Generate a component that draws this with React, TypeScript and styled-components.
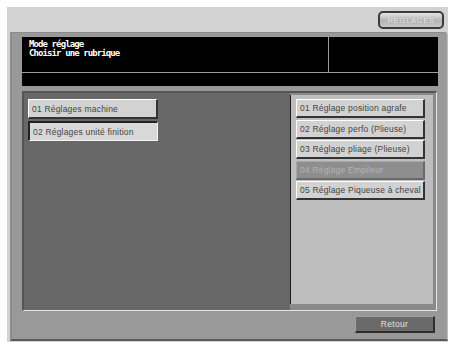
import React from 'react';
import styled, { createGlobalStyle } from 'styled-components';

const GlobalStyle = createGlobalStyle`
  body {
    margin: 0;
    background: #ffffff;
    font-family: "Liberation Sans", Arial, sans-serif;
  }
`;

const Screen = styled.div`
  margin: 7px 0 0 7px;
  width: 441px;
  height: 335px;
  background: #d2d2d2;
  display: flex;
  flex-direction: column;
`;

const TopBar = styled.div`
  height: 25px;
  display: flex;
  justify-content: flex-end;
  align-items: flex-start;
  padding: 4px 4px 0 0;
  box-sizing: border-box;
`;

const ModeButton = styled.div`
  width: 66px;
  height: 18px;
  box-sizing: border-box;
  border: 2px solid #3a3a3a;
  border-radius: 5px;
  background: linear-gradient(#e4e4e4, #b4b4b4 55%, #c8c8c8);
  display: flex;
  align-items: center;
  justify-content: center;
  font-size: 8px;
  letter-spacing: 0.4px;
  color: #f4f4f4;
  text-shadow: 0 0 1px #777;
`;

const MainPanel = styled.div`
  margin-left: 3px;
  width: 438px;
  height: 309px;
  box-sizing: border-box;
  background: #999999;
  border-top: 1px solid #8a8a8a;
  border-left: 2px solid #8c8c8c;
  border-right: 1px solid #bdbdbd;
  border-bottom: 2px solid #5a5a5a;
  border-radius: 0 4px 0 0;
  padding: 4px 9px 0 10px;
  display: flex;
  flex-direction: column;
`;

const Header = styled.div`
  width: 416px;
  background: #000;
  display: flex;
  flex-direction: column;
`;

const HeaderTop = styled.div`
  height: 35px;
  display: flex;
  border-bottom: 1px solid #9c9c9c;
`;

const Message = styled.div`
  flex: 1;
  border-right: 1px solid #9c9c9c;
  padding: 3px 0 0 7px;
  color: #ffffff;
  font-family: "DejaVu Sans Mono", "Liberation Mono", monospace;
  font-weight: bold;
  font-size: 9px;
  letter-spacing: -0.9px;
  line-height: 8.5px;
`;

const Side = styled.div`
  width: 109px;
`;

const InfoBar = styled.div`
  height: 13px;
`;

const Content = styled.div`
  margin-top: 5px;
  width: 415px;
  height: 220px;
  box-sizing: border-box;
  border-top: 2px solid #555;
  border-left: 2px solid #555;
  border-right: 1px solid #e4e4e4;
  border-bottom: 1px solid #e4e4e4;
  background: #8a8a8a;
  display: flex;
`;

const LeftArea = styled.div`
  flex: 1;
  background: #686868;
  padding: 6px 0 0 4px;
  display: flex;
  flex-direction: column;
  gap: 2px;
`;

const RightArea = styled.div`
  width: 146px;
  padding: 2px 3px 6px 0;
  box-sizing: border-box;
  display: flex;
`;

const ListPanel = styled.div`
  flex: 1;
  background: #bebebe;
  border-left: 1px solid #1a1a1a;
  padding: 4px 0 0 5px;
  display: flex;
  flex-direction: column;
  gap: 1.5px;
`;

type ButtonState = 'normal' | 'active' | 'off';

const MenuButton = styled.div<{ $state: ButtonState; $w?: number; $h?: number }>`
  box-sizing: border-box;
  width: ${(p) => p.$w ?? 129}px;
  height: ${(p) => p.$h ?? 19}px;
  display: flex;
  align-items: center;
  padding-left: 3px;
  font-size: 8.5px;
  letter-spacing: 0.2px;
  white-space: nowrap;
  overflow: hidden;
  background: ${(p) => (p.$state === 'off' ? '#8e8e8e' : p.$state === 'active' ? '#d8d8d8' : '#d2d2d2')};
  color: ${(p) => (p.$state === 'off' ? '#b4b4b4' : '#444444')};
  border-top: ${(p) => (p.$state === 'active' ? '2px solid #222' : p.$state === 'off' ? '1px solid #a8a8a8' : '1px solid #ffffff')};
  border-left: ${(p) => (p.$state === 'active' ? '2px solid #222' : p.$state === 'off' ? '1px solid #a8a8a8' : '1px solid #ffffff')};
  border-bottom: ${(p) => (p.$state === 'active' ? '1px solid #f4f4f4' : p.$state === 'off' ? '2px solid #6a6a6a' : '2px solid #333')};
  border-right: ${(p) => (p.$state === 'active' ? '1px solid #f4f4f4' : p.$state === 'off' ? '2px solid #6a6a6a' : '2px solid #333')};
`;

const Footer = styled.div`
  margin-top: 5px;
  width: 416px;
  display: flex;
  justify-content: flex-end;
  padding-right: 3px;
  box-sizing: border-box;
`;

const BackButton = styled.div`
  width: 80px;
  height: 17px;
  box-sizing: border-box;
  background: #6a6a6a;
  border-top: 1px solid #a0a0a0;
  border-left: 1px solid #a0a0a0;
  border-right: 2px solid #2e2e2e;
  border-bottom: 2px solid #2e2e2e;
  color: #e2e2e2;
  font-size: 8.5px;
  letter-spacing: 0.3px;
  display: flex;
  align-items: center;
  justify-content: center;
`;

const leftItems: { label: string; state: ButtonState }[] = [
  { label: '01 Réglages machine', state: 'normal' },
  { label: '02 Réglages unité finition', state: 'active' },
];

const rightItems: { label: string; state: ButtonState }[] = [
  { label: '01 Réglage position agrafe', state: 'normal' },
  { label: '02 Réglage perfo (Plieuse)', state: 'normal' },
  { label: '03 Réglage pliage (Plieuse)', state: 'normal' },
  { label: '04 Réglage Empileur', state: 'off' },
  { label: '05 Réglage Piqueuse à cheval', state: 'normal' },
];

export default function App() {
  return (
    <>
      <GlobalStyle />
      <Screen>
        <TopBar>
          <ModeButton>RÉGLAGES</ModeButton>
        </TopBar>
        <MainPanel>
          <Header>
            <HeaderTop>
              <Message>
                Mode réglage
                <br />
                Choisir une rubrique
              </Message>
              <Side />
            </HeaderTop>
            <InfoBar />
          </Header>
          <Content>
            <LeftArea>
              {leftItems.map((it) => (
                <MenuButton key={it.label} $state={it.state} $w={130} $h={20}>
                  {it.label}
                </MenuButton>
              ))}
            </LeftArea>
            <RightArea>
              <ListPanel>
                {rightItems.map((it) => (
                  <MenuButton key={it.label} $state={it.state}>
                    {it.label}
                  </MenuButton>
                ))}
              </ListPanel>
            </RightArea>
          </Content>
          <Footer>
            <BackButton>Retour</BackButton>
          </Footer>
        </MainPanel>
      </Screen>
    </>
  );
}
